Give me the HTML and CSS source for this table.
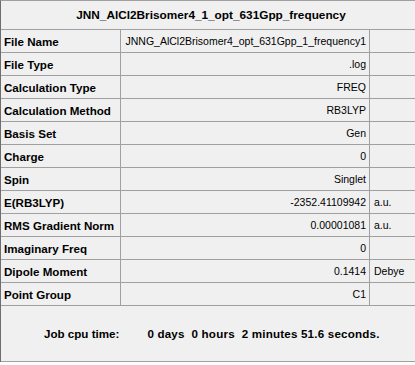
FILE: index.html
```html
<!DOCTYPE html>
<html>
<head>
<meta charset="utf-8">
<link rel="stylesheet" href="styles.css">
</head>
<body>
<div class="panel">
  <div class="title">JNN_AlCl2Brisomer4_1_opt_631Gpp_frequency</div>
  <div class="label">File Name</div><div class="value">JNNG_AlCl2Brisomer4_opt_631Gpp_1_frequency1</div><div class="unit"></div>
  <div class="label">File Type</div><div class="value">.log</div><div class="unit"></div>
  <div class="label">Calculation Type</div><div class="value">FREQ</div><div class="unit"></div>
  <div class="label">Calculation Method</div><div class="value">RB3LYP</div><div class="unit"></div>
  <div class="label">Basis Set</div><div class="value">Gen</div><div class="unit"></div>
  <div class="label">Charge</div><div class="value">0</div><div class="unit"></div>
  <div class="label">Spin</div><div class="value">Singlet</div><div class="unit"></div>
  <div class="label">E(RB3LYP)</div><div class="value">-2352.41109942</div><div class="unit">a.u.</div>
  <div class="label">RMS Gradient Norm</div><div class="value">0.00001081</div><div class="unit">a.u.</div>
  <div class="label">Imaginary Freq</div><div class="value">0</div><div class="unit"></div>
  <div class="label">Dipole Moment</div><div class="value">0.1414</div><div class="unit">Debye</div>
  <div class="label">Point Group</div><div class="value">C1</div><div class="unit"></div>
  <div class="footer"><span class="cpu-label">Job cpu time:</span><span class="cpu-value">0 days  0 hours  2 minutes 51.6 seconds.</span></div>
</div>
</body>
</html>
```
FILE: styles.css
```css
html, body {
  margin: 0;
  padding: 0;
  background: #ffffff;
  overflow: hidden;
}
body {
  font-family: "Liberation Sans", Arial, sans-serif;
  font-size: 10.5px;
  color: #000;
}
.panel {
  width: 420px;
  display: grid;
  grid-template-columns: 120px 249px 1fr;
  border-left: 1px solid #6e6e6e;
  border-top: 1px solid #a0a0a0;
  background: #f0f0f0;
}
.panel > div {
  height: 22px;
  border-bottom: 1px solid #a0a0a0;
  display: flex;
  align-items: center;
  white-space: pre;
  overflow: hidden;
}
.panel > .title {
  grid-column: 1 / -1;
  height: 28px;
  justify-content: center;
  font-weight: bold;
  font-size: 11.8px;
}
.label {
  border-right: 1px solid #a0a0a0;
  font-weight: bold;
  font-size: 11.6px;
  padding-left: 3px;
}
.value {
  border-right: 1px solid #a0a0a0;
  justify-content: flex-end;
  padding-right: 3px;
}
.unit {
  padding-left: 4px;
}
.panel > .footer {
  grid-column: 1 / -1;
  height: 55px;
  font-weight: bold;
  font-size: 11.6px;
  padding-left: 43px;
}
.cpu-value {
  margin-left: 28px;
  letter-spacing: 0.2px;
}
```
